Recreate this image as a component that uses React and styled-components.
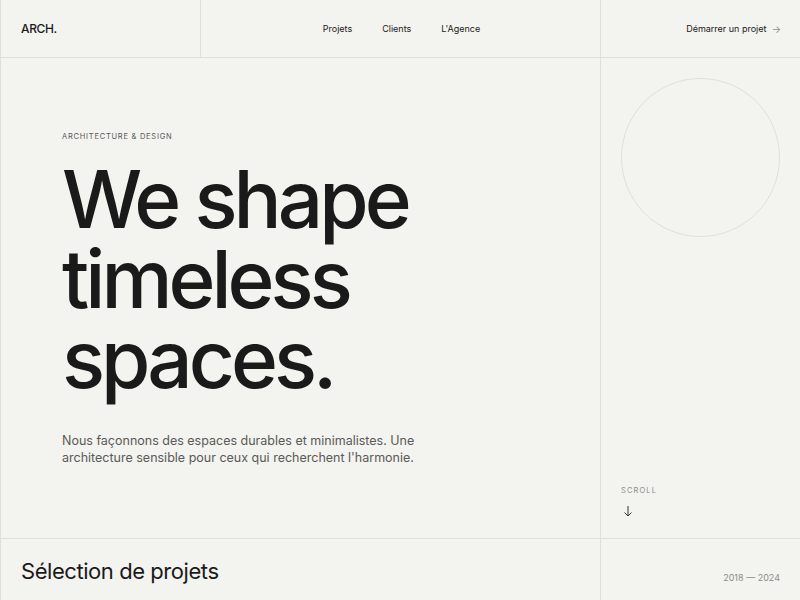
import React from 'react';
import styled, { createGlobalStyle } from 'styled-components';

const colors = {
  bg: '#f3f3ef',
  line: '#e0e0db',
  ink: '#1a1a1a',
  muted: '#5a5a58',
  faint: '#8e8e8a',
};

const GlobalStyle = createGlobalStyle`
  html, body {
    margin: 0;
    padding: 0;
    background: ${colors.bg};
  }
  body {
    font-family: Inter, "Noto Sans", sans-serif;
    color: ${colors.ink};
    -webkit-font-smoothing: antialiased;
  }
  * { box-sizing: border-box; }
`;

const Page = styled.div`
  width: 800px;
  height: 600px;
  overflow: hidden;
  border-left: 1px solid ${colors.line};
  display: grid;
  grid-template-rows: 58px 481px 1fr;
`;

const Header = styled.header`
  display: grid;
  grid-template-columns: 200px 400px 200px;
  border-bottom: 1px solid ${colors.line};
`;

const Cell = styled.div`
  display: flex;
  align-items: center;
  justify-content: ${(p) => p.$justify || 'flex-start'};
  padding: 0 20px;
  border-right: ${(p) => (p.$divider ? `1px solid ${colors.line}` : 'none')};
`;

const Logo = styled.span`
  font-size: 12px;
  font-weight: 500;
  letter-spacing: -0.03em;
`;

const Nav = styled.nav`
  display: flex;
  gap: 30px;
  padding-left: 2px;

  a {
    font-size: 9px;
    color: ${colors.ink};
    text-decoration: none;
  }
`;

const Cta = styled.a`
  display: flex;
  align-items: center;
  gap: 5px;
  font-size: 9px;
  color: ${colors.ink};
  text-decoration: none;

  span {
    color: ${colors.faint};
    font-size: 10px;
  }
`;

const Hero = styled.section`
  display: grid;
  grid-template-columns: 600px 200px;
  border-bottom: 1px solid ${colors.line};
`;

const HeroMain = styled.div`
  padding: 74px 60px 0 61px;
  border-right: 1px solid ${colors.line};
`;

const Eyebrow = styled.div`
  font-size: 7.5px;
  letter-spacing: 0.1em;
  color: ${colors.muted};
  text-transform: uppercase;
  margin-bottom: 18px;
`;

const Title = styled.h1`
  margin: 0;
  font-size: 80px;
  font-weight: 500;
  line-height: 80px;
  letter-spacing: -0.05em;
  color: ${colors.ink};
`;

const Lead = styled.p`
  margin: 33px 0 0;
  max-width: 370px;
  font-size: 12.5px;
  line-height: 17px;
  color: ${colors.muted};
`;

const Aside = styled.aside`
  display: flex;
  flex-direction: column;
  justify-content: space-between;
  padding: 20px 20px 21px 20px;
`;

const Circle = styled.div`
  width: 159px;
  height: 159px;
  border-radius: 50%;
  border: 1px solid ${colors.line};
`;

const Scroll = styled.div`
  display: flex;
  flex-direction: column;
  gap: 10px;
  font-size: 7.5px;
  letter-spacing: 0.15em;
  color: ${colors.faint};
  svg { margin-left: 2px; }
`;

const Footer = styled.section`
  display: grid;
  grid-template-columns: 600px 200px;
`;

const FooterTitle = styled.h2`
  margin: 0;
  padding: 19px 20px 0 20px;
  font-size: 22px;
  font-weight: 400;
  letter-spacing: -0.02em;
  border-right: 1px solid ${colors.line};
`;

const Years = styled.div`
  padding: 33px 21px 0 0;
  text-align: right;
  font-size: 9px;
  color: ${colors.faint};
`;

export default function App() {
  return (
    <>
      <GlobalStyle />
      <Page>
        <Header>
          <Cell $divider>
            <Logo>ARCH.</Logo>
          </Cell>
          <Cell $divider $justify="center">
            <Nav>
              <a href="#">Projets</a>
              <a href="#">Clients</a>
              <a href="#">L'Agence</a>
            </Nav>
          </Cell>
          <Cell $justify="flex-end">
            <Cta href="#">
              Démarrer un projet <span>→</span>
            </Cta>
          </Cell>
        </Header>

        <Hero>
          <HeroMain>
            <Eyebrow>Architecture &amp; Design</Eyebrow>
            <Title>
              We shape
              <br />
              timeless
              <br />
              spaces.
            </Title>
            <Lead>
              Nous façonnons des espaces durables et minimalistes. Une architecture sensible pour
              ceux qui recherchent l'harmonie.
            </Lead>
          </HeroMain>
          <Aside>
            <Circle />
            <Scroll>
              SCROLL
              <svg width="10" height="12" viewBox="0 0 10 12" fill="none" stroke="#333" strokeWidth="1">
                <path d="M5 1v10M1.5 7.5L5 11l3.5-3.5" />
              </svg>
            </Scroll>
          </Aside>
        </Hero>

        <Footer>
          <FooterTitle>Sélection de projets</FooterTitle>
          <Years>2018 — 2024</Years>
        </Footer>
      </Page>
    </>
  );
}
